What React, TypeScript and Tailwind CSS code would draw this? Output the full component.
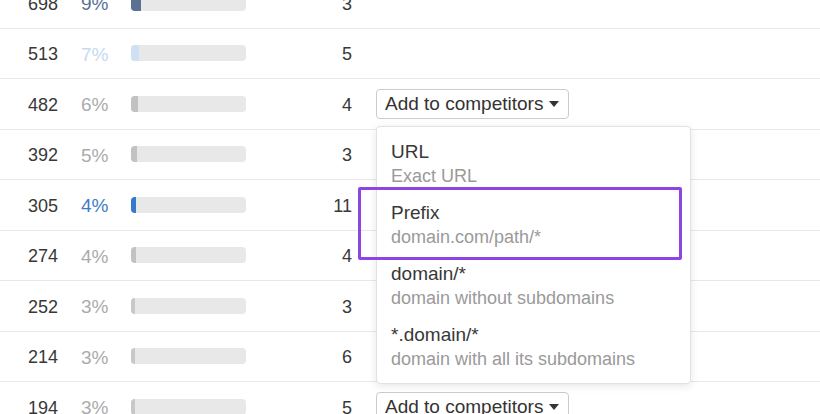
import React from "react";

type Row = {
  visits: number;
  pct: string;
  pctColor: string;
  fill: string;
  fillWidth: number;
  count: number;
  button?: boolean;
};

const rows: Row[] = [
  { visits: 698, pct: "9%", pctColor: "text-[#5b7192]", fill: "bg-[#5b7192]", fillWidth: 10, count: 3 },
  { visits: 513, pct: "7%", pctColor: "text-[#c6daf1]", fill: "bg-[#cfe0f5]", fillWidth: 8, count: 5 },
  { visits: 482, pct: "6%", pctColor: "text-[#ababab]", fill: "bg-[#c2c2c2]", fillWidth: 7, count: 4, button: true },
  { visits: 392, pct: "5%", pctColor: "text-[#ababab]", fill: "bg-[#c2c2c2]", fillWidth: 6, count: 3 },
  { visits: 305, pct: "4%", pctColor: "text-[#3f7cc8]", fill: "bg-[#3479cb]", fillWidth: 5, count: 11 },
  { visits: 274, pct: "4%", pctColor: "text-[#ababab]", fill: "bg-[#c2c2c2]", fillWidth: 5, count: 4 },
  { visits: 252, pct: "3%", pctColor: "text-[#ababab]", fill: "bg-[#c8c8c8]", fillWidth: 4, count: 3 },
  { visits: 214, pct: "3%", pctColor: "text-[#ababab]", fill: "bg-[#c8c8c8]", fillWidth: 4, count: 6 },
  { visits: 194, pct: "3%", pctColor: "text-[#ababab]", fill: "bg-[#c8c8c8]", fillWidth: 4, count: 5, button: true },
];

const options = [
  { title: "URL", desc: "Exact URL" },
  { title: "Prefix", desc: "domain.com/path/*" },
  { title: "domain/*", desc: "domain without subdomains" },
  { title: "*.domain/*", desc: "domain with all its subdomains" },
];

const AddButton = () => (
  <div className="ml-[24px] flex h-[30px] w-[193px] items-center justify-between rounded-[4px] border border-[#cccccc] bg-white pl-[8px] pr-[9px] pt-[1px] text-[19px] text-[#333]">
    <span>Add to competitors</span>
    <svg width="10" height="6" viewBox="0 0 10 6">
      <path d="M0 0 L10 0 L5 6 Z" fill="#333" />
    </svg>
  </div>
);

export default function App() {
  return (
    <div className="relative h-[414px] w-[820px] overflow-hidden bg-white font-['Liberation_Sans',Arial,sans-serif]">
      <div className="mt-[-22px] flex flex-col">
        {rows.map((r, i) => (
          <div key={i} className="flex h-[50.5px] items-center border-b border-[#e8e8e8] text-[18px]">
            <div className="w-[58px] pt-[3px] text-right text-[#383838]">{r.visits}</div>
            <div className={`ml-[23px] w-[50px] pt-[3px] text-[19px] ${r.pctColor}`}>{r.pct}</div>
            <div className="h-[16px] w-[115px] overflow-hidden rounded-[4px] bg-[#e8e8e8]">
              <div className={`h-full ${r.fill}`} style={{ width: r.fillWidth }} />
            </div>
            <div className="w-[106px] pt-[3px] text-right text-[#383838]">{r.count}</div>
            {r.button && <AddButton />}
          </div>
        ))}
      </div>

      {/* dropdown menu */}
      <div className="absolute left-[376px] top-[126px] w-[315px] rounded-[4px] border border-[#e2e2e2] bg-white py-[6px] shadow-[0_2px_8px_rgba(0,0,0,0.10)]">
        {options.map((o) => (
          <div key={o.title} className="flex h-[61px] flex-col justify-center px-[14px] leading-[25px]">
            <div className="text-[19px] text-[#383838]">{o.title}</div>
            <div className="text-[18px] text-[#9a9a9a]">{o.desc}</div>
          </div>
        ))}
      </div>

      {/* highlight annotation */}
      <div className="absolute left-[358px] top-[187px] h-[73px] w-[324px] rounded-[2px] border-[3px] border-[#8c45e3]" />
    </div>
  );
}
